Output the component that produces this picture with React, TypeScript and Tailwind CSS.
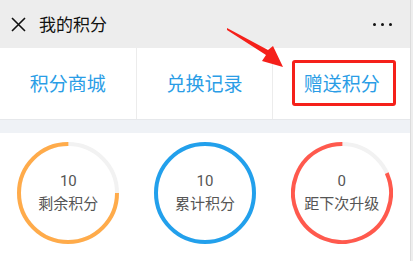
import React from "react";

const font = { fontFamily: '"Noto Sans CJK SC", "Noto Sans", sans-serif' };

type RingProps = { color: string; value: string; label: string; ratio: number; rotate: number };

function Ring({ color, value, label, ratio, rotate }: RingProps) {
  const r = 49;
  const c = 2 * Math.PI * r;
  return (
    <div className="relative w-[102px] h-[102px]">
      <svg width="102" height="102" viewBox="0 0 102 102" className="absolute inset-0">
        <circle cx="51" cy="51" r={r} fill="none" stroke="#f2f2f2" strokeWidth="4" />
        <circle
          cx="51"
          cy="51"
          r={r}
          fill="none"
          stroke={color}
          strokeWidth="4"
          strokeDasharray={`${c * ratio} ${c}`}
          transform={`rotate(${rotate} 51 51)`}
        />
      </svg>
      <div className="absolute inset-0 flex flex-col items-center justify-center text-[#555] pb-[3px]">
        <span className="text-[15px] leading-[22px]" style={{ fontFamily: "Roboto, sans-serif" }}>{value}</span>
        <span className="text-[15px] leading-[22px]">{label}</span>
      </div>
    </div>
  );
}

export default function App() {
  return (
    <div className="w-[413px] h-[261px] flex bg-white overflow-hidden relative" style={font}>
      <div className="w-[410px] flex flex-col">
        {/* Header */}
        <div className="h-[48px] bg-[#ededed] flex items-center px-[11px]">
          <svg width="15" height="15" viewBox="0 0 15 15" className="shrink-0">
            <path d="M1 1 L14 14 M14 1 L1 14" stroke="#111" strokeWidth="1.6" />
          </svg>
          <span className="ml-[13px] text-[17px] text-[#111]">我的积分</span>
          <div className="ml-auto mr-[7px] flex gap-[5px]">
            <span className="w-[3px] h-[3px] rounded-full bg-[#111]" />
            <span className="w-[3px] h-[3px] rounded-full bg-[#111]" />
            <span className="w-[3px] h-[3px] rounded-full bg-[#111]" />
          </div>
        </div>

        {/* Tabs */}
        <div className="h-[71px] grid grid-cols-3 bg-white">
          <div className="flex items-center justify-center text-[19px] text-[#2a9de6] border-r border-[#ececec]">积分商城</div>
          <div className="flex items-center justify-center text-[19px] text-[#2a9de6] border-r border-[#ececec]">兑换记录</div>
          <div className="relative flex items-center justify-center text-[19px] text-[#2a9de6]">
            赠送积分
            <div className="absolute left-[19px] top-[12px] w-[104px] h-[46px] border-[3px] border-[#f5201a] rounded-[3px]" />
          </div>
        </div>

        <div className="h-[14px] bg-[#eff2f6] border-t border-[#e6e8eb]" />

        {/* Rings */}
        <div className="grid grid-cols-3 pt-[9px] bg-white flex-1">
          <div className="flex justify-center">
            <Ring color="#ffab4a" value="10" label="剩余积分" ratio={0.75} rotate={0} />
          </div>
          <div className="flex justify-center">
            <Ring color="#22a0ec" value="10" label="累计积分" ratio={1} rotate={0} />
          </div>
          <div className="flex justify-center">
            <Ring color="#ff594d" value="0" label="距下次升级" ratio={294 / 360} rotate={-24} />
          </div>
        </div>
      </div>
      <div className="w-[3px] bg-[#eeeeee] border-l border-[#dcdcdc]" />

      {/* annotation arrow */}
      <svg width="413" height="261" className="absolute inset-0 pointer-events-none">
        <polygon points="227,28 268,50 273,46 283,67 262,61 266,55 227,30" fill="#f5201a" />
      </svg>
    </div>
  );
}
